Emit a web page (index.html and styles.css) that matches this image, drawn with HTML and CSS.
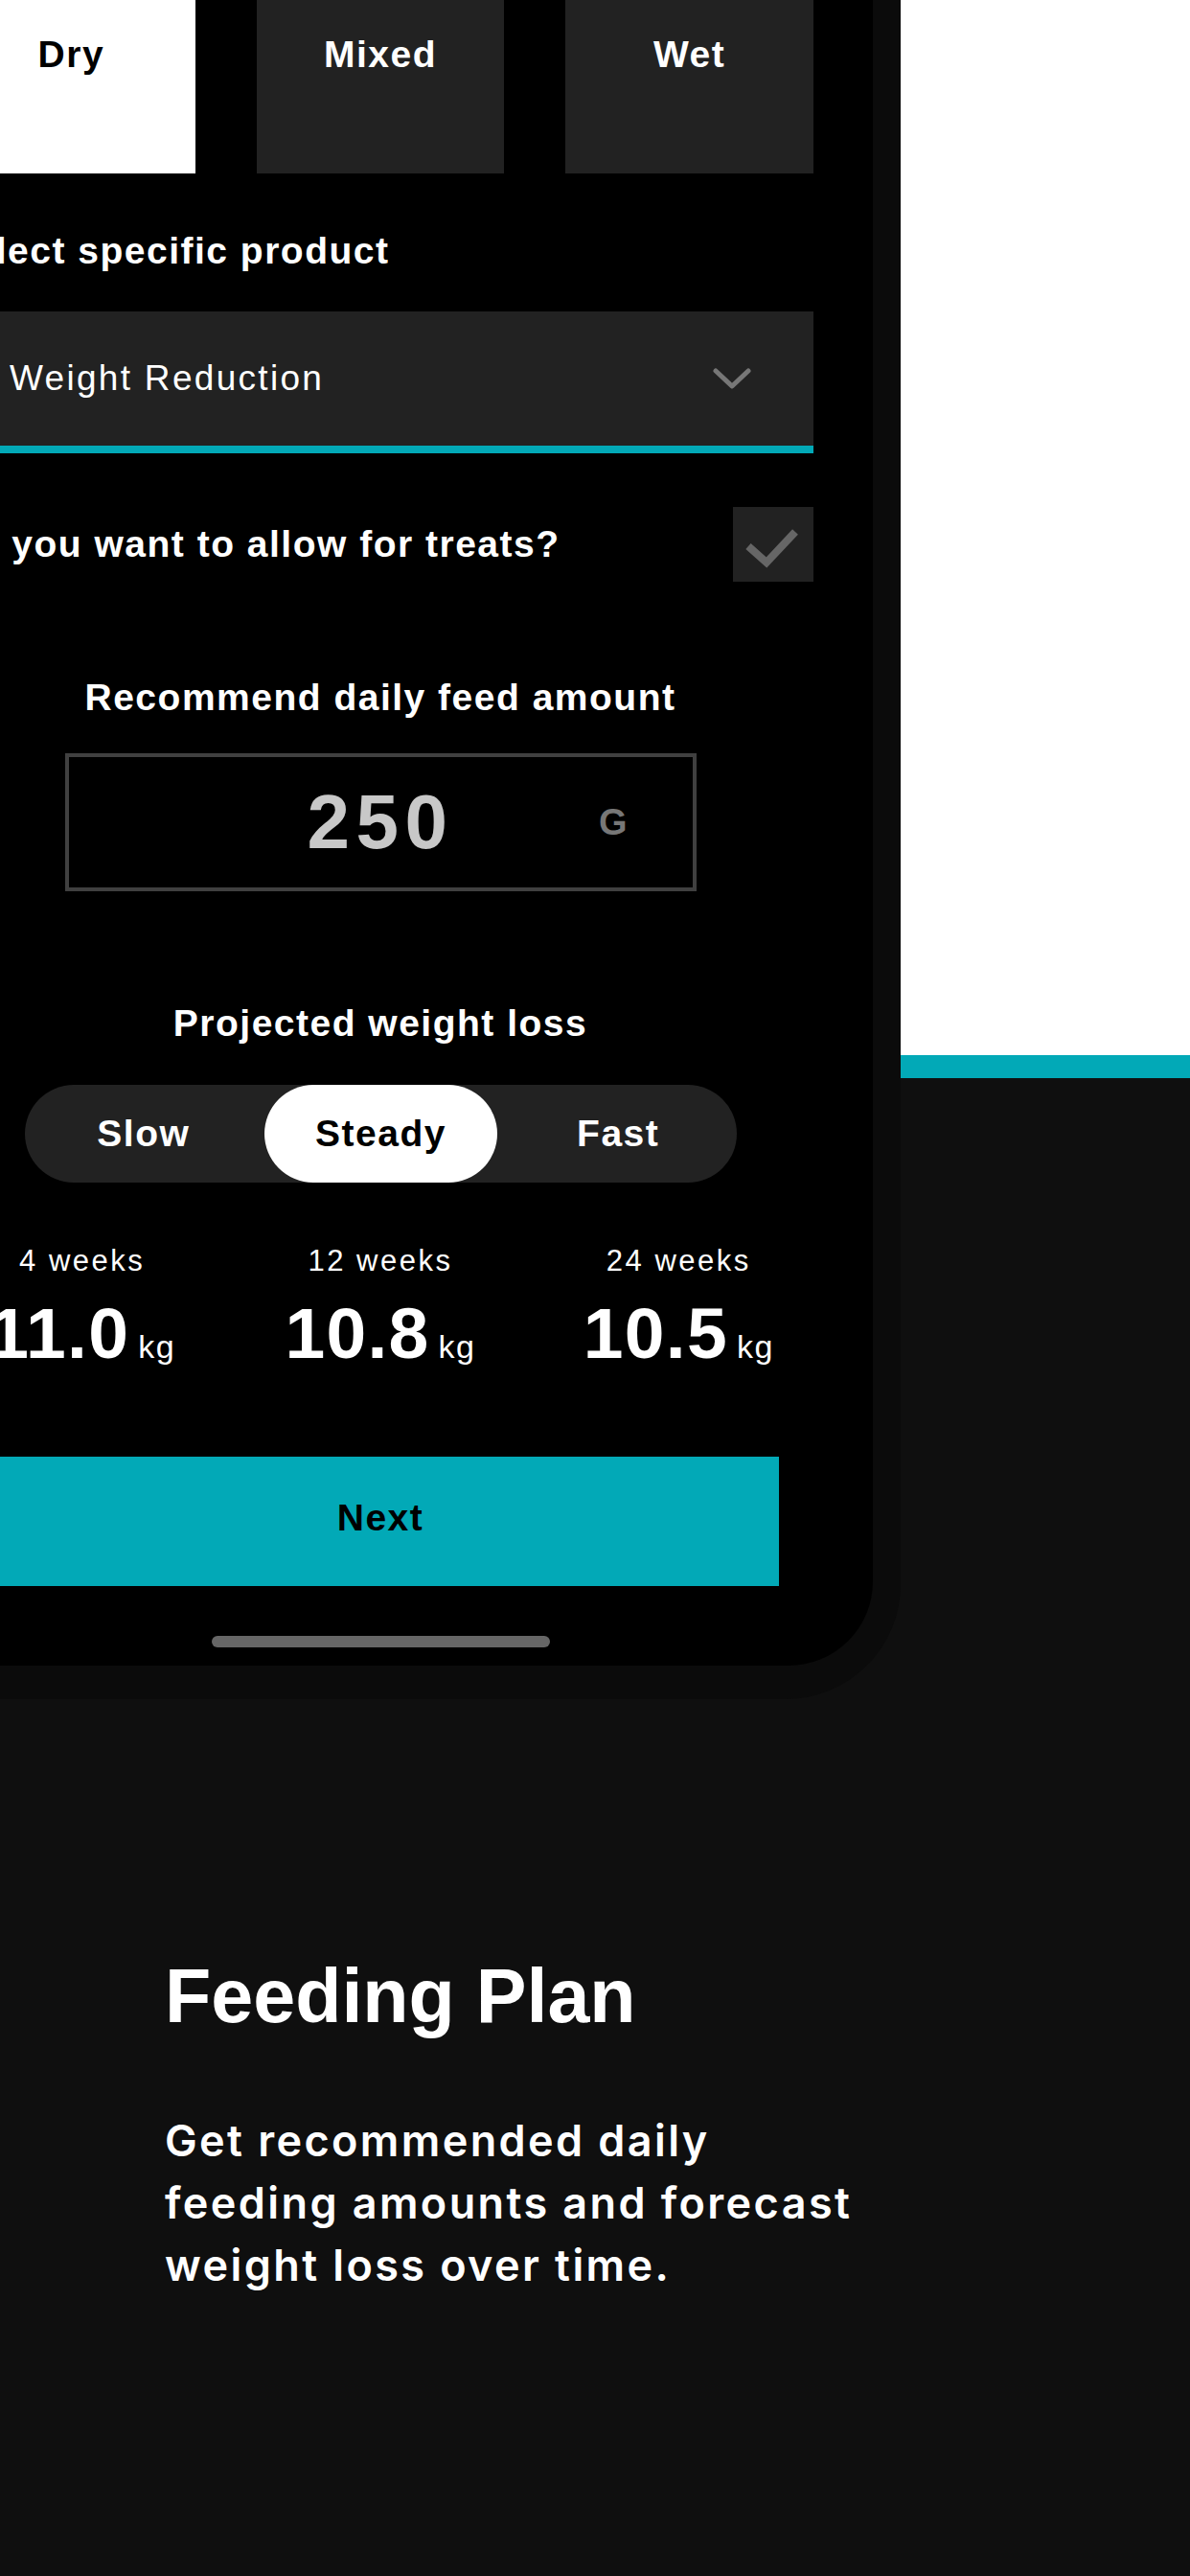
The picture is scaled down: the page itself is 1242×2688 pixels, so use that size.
FILE: index.html
```html
<!DOCTYPE html>
<html lang="en">
<head>
    <meta charset="UTF-8">
    <meta name="viewport" content="width=device-width, initial-scale=1.0">
    <title>Feeding Plan</title>
    <link rel="stylesheet" href="styles.css">
</head>
<body>

<div class="hero">
    <!-- Phone mockup with the feeding plan screen -->
    <div class="phone">
        <div class="screen">
            <div class="food-types">
                <div class="food-card active">Dry</div>
                <div class="food-card">Mixed</div>
                <div class="food-card">Wet</div>
            </div>

            <p class="label product-label">Select specific product</p>
            <div class="dropdown">
                <span>Weight Reduction</span>
                <svg class="chevron" width="40" height="22" viewBox="0 0 40 22">
                    <polyline points="3,3 20,19 37,3" fill="none" stroke="#777" stroke-width="5" stroke-linecap="round" stroke-linejoin="round"/>
                </svg>
            </div>

            <div class="treats-row">
                <p class="label">Do you want to allow for treats?</p>
                <div class="checkbox">
                    <svg width="84" height="78" viewBox="0 0 84 78">
                        <polyline points="16,41 35,58 65,26" fill="none" stroke="#666" stroke-width="8"/>
                    </svg>
                </div>
            </div>

            <!-- Daily amount -->
            <p class="label centered feed-title">Recommend daily feed amount</p>
            <div class="feed-box">
                <span class="feed-value">250</span>
                <span class="feed-unit">G</span>
            </div>

            <!-- Weight loss speed -->
            <p class="label centered speed-title">Projected weight loss</p>
            <div class="speed-toggle">
                <span>Slow</span>
                <span class="active">Steady</span>
                <span>Fast</span>
            </div>

            <div class="stats">
                <div class="stat">
                    <span class="stat-label">4 weeks</span>
                    <span class="stat-value">11.0<small>kg</small></span>
                </div>
                <div class="stat">
                    <span class="stat-label">12 weeks</span>
                    <span class="stat-value">10.8<small>kg</small></span>
                </div>
                <div class="stat">
                    <span class="stat-label">24 weeks</span>
                    <span class="stat-value">10.5<small>kg</small></span>
                </div>
            </div>

            <button class="btn">Next</button>
            <div class="home-bar"></div>
        </div>
    </div>

    <div class="side">
        <div class="side-panel"></div>
        <div class="side-strip"></div>
    </div>
</div>

<div class="feature">
    <h1>Feeding Plan</h1>
    <p>Get recommended daily<br>feeding amounts and forecast<br>weight loss over time.</p>
</div>

</body>
</html>
```

FILE: styles.css
```css
body {
    margin: 0;
    background-color: #0f0f0f;
    font-family: "Liberation Sans", Arial, sans-serif;
    overflow-x: hidden;
}
.hero {
    display: grid;
    grid-template-columns: 940px 1fr;
    align-items: start;
}
.phone {
    margin-left: -117px;
    padding: 0 29px 35px 0;
    background-color: #0b0b0b;
    border-bottom-right-radius: 120px;
}
.screen {
    background-color: #000;
    padding: 0 62px 19px;
    border-bottom-right-radius: 88px;
}
.food-types {
    display: grid;
    grid-template-columns: repeat(3, 1fr);
    gap: 64px;
}
.food-card {
    height: 181px;
    box-sizing: border-box;
    padding-top: 34px;
    background-color: #222;
    color: white;
    text-align: center;
    font-size: 39px;
    line-height: 46px;
    font-weight: bold;
    letter-spacing: 1.5px;
}
.food-card.active {
    background-color: white;
    color: black;
}
.label {
    margin: 0;
    color: white;
    font-size: 39px;
    line-height: 46px;
    font-weight: bold;
    letter-spacing: 1.5px;
}
.centered {
    text-align: center;
}
.product-label {
    margin-top: 58px;
}
.dropdown {
    margin-top: 40px;
    height: 140px;
    padding: 0 65px;
    display: flex;
    align-items: center;
    justify-content: space-between;
    background-color: #222;
    border-bottom: 8px solid #02a9b7;
    color: white;
    font-size: 37px;
    letter-spacing: 2.3px;
}
.treats-row {
    margin-top: 56px;
    display: flex;
    align-items: center;
    justify-content: space-between;
}
.checkbox {
    width: 84px;
    height: 78px;
    background-color: #222;
}
.checkbox svg {
    display: block;
}
.feed-title {
    margin-top: 98px;
}
.feed-box {
    margin: 35px auto 0;
    width: 659px;
    height: 144px;
    box-sizing: border-box;
    border: 4px solid #404040;
    display: grid;
    grid-template-columns: 1fr auto 1fr;
    align-items: center;
}
.feed-value {
    grid-column: 2;
    font-size: 80px;
    line-height: 1;
    font-weight: bold;
    color: #c8c8c8;
    letter-spacing: 6.5px;
}
.feed-unit {
    justify-self: end;
    margin-right: 68px;
    font-size: 38px;
    font-weight: bold;
    color: #777;
}
.speed-title {
    margin-top: 115px;
}
.speed-toggle {
    margin: 41px 0 0 81px;
    width: 743px;
    height: 102px;
    display: grid;
    grid-template-columns: repeat(3, 1fr);
    background-color: #222;
    border-radius: 51px;
}
.speed-toggle span {
    display: flex;
    align-items: center;
    justify-content: center;
    border-radius: 51px;
    color: white;
    font-size: 39px;
    font-weight: bold;
    letter-spacing: 1.5px;
}
.speed-toggle .active {
    margin: 0 2px;
    background-color: white;
    color: black;
}
.stats {
    margin: 64px -15px 0;
    display: grid;
    grid-template-columns: repeat(3, 1fr);
    text-align: center;
    color: white;
}
.stat-label {
    display: block;
    font-size: 31px;
    line-height: 36px;
    letter-spacing: 2.5px;
}
.stat-value {
    display: block;
    margin-top: 17px;
    font-size: 75px;
    line-height: 80px;
    font-weight: bold;
    letter-spacing: 1.3px;
}
.stat-value small {
    margin-left: 9px;
    font-size: 34px;
    line-height: 1;
    font-weight: normal;
    letter-spacing: 1.5px;
}
.btn {
    display: block;
    margin: 89px 36px 0;
    padding: 0 0 8px;
    width: calc(100% - 72px);
    height: 135px;
    border: none;
    background-color: #02a9b7;
    color: black;
    font-family: inherit;
    font-size: 39px;
    font-weight: bold;
    letter-spacing: 1.5px;
}
.home-bar {
    margin: 52px auto 0;
    width: 353px;
    height: 12px;
    border-radius: 6px;
    background-color: #666;
}
.side-panel {
    height: 1101px;
    background-color: white;
}
.side-strip {
    height: 24px;
    background-color: #02a9b7;
}
.feature {
    padding: 265px 0 0 172px;
    color: white;
}
.feature h1 {
    margin: 0;
    font-size: 79px;
    line-height: 90px;
    font-weight: bold;
}
.feature p {
    margin: 73px 0 0;
    font-family: Inter, "Liberation Sans", sans-serif;
    font-size: 45px;
    line-height: 65px;
    font-weight: 600;
    letter-spacing: 2.4px;
}
```
